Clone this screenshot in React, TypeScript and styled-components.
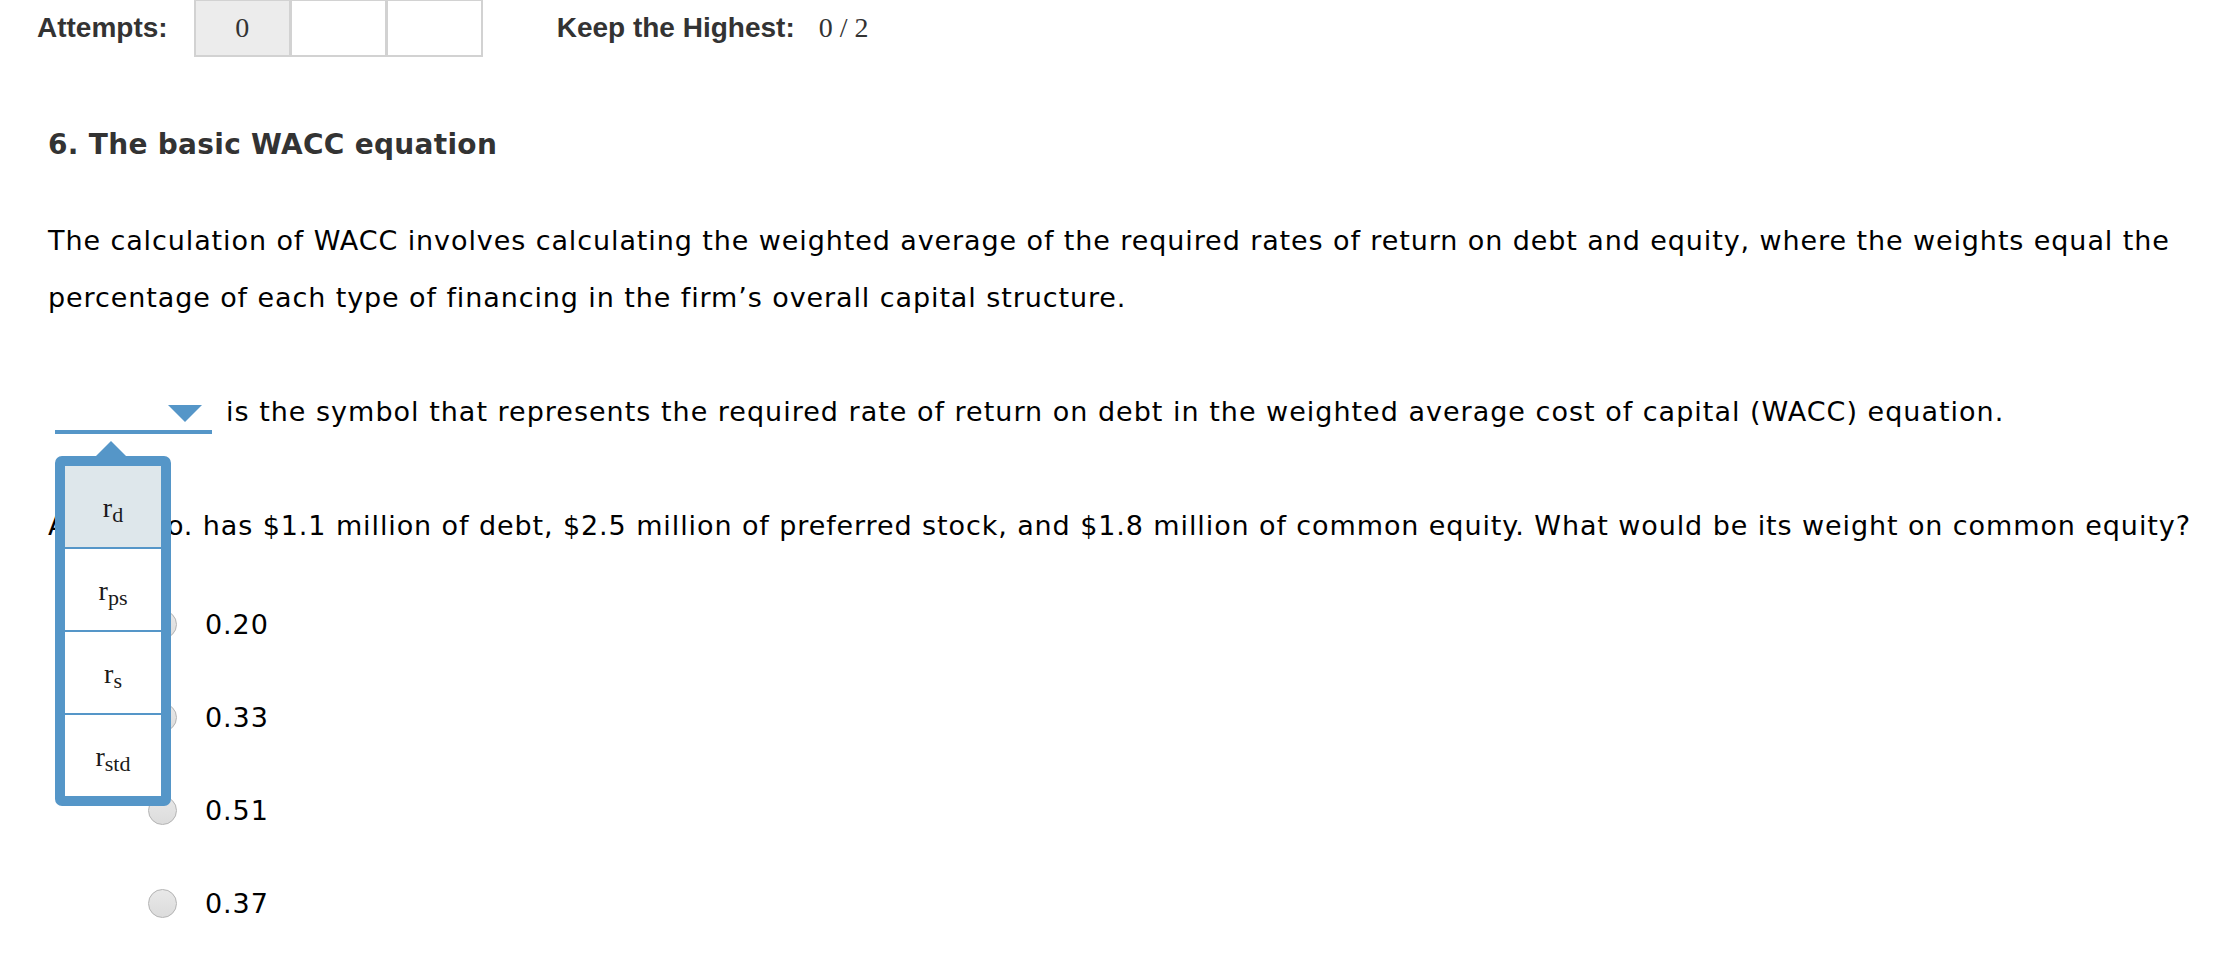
import React from "react";
import styled, { createGlobalStyle } from "styled-components";

const GlobalStyle = createGlobalStyle`
  html, body {
    margin: 0;
    padding: 0;
    background: #ffffff;
  }
  body {
    font-family: "DejaVu Sans", Verdana, sans-serif;
    color: #000000;
    overflow: hidden;
  }
`;

const blue = "#5596c8";

const options = ["0.20", "0.33", "0.51", "0.37"];
const choices = [
  { base: "r", sub: "d", active: true },
  { base: "r", sub: "ps" },
  { base: "r", sub: "s" },
  { base: "r", sub: "std" },
];

const App = () => {
  return (
    <>
      <GlobalStyle />
      <Page>
        <AttemptsBar>
          <BarLabel>Attempts:</BarLabel>
          <AttemptBoxes>
            <AttemptBox filled>0</AttemptBox>
            <AttemptBox />
            <AttemptBox />
          </AttemptBoxes>
          <BarLabel spaced>Keep the Highest:</BarLabel>
          <Score>0 / 2</Score>
        </AttemptsBar>

        <Content>
          <Title>6. The basic WACC equation</Title>
          <Para>
            The calculation of WACC involves calculating the weighted average of the required rates of
            return on debt and equity, where the weights equal the percentage of each type of financing in
            the firm’s overall capital structure.
          </Para>

          <Sentence>
            <DropWrap>
              <DropField>
                <Caret />
              </DropField>
              <Popup>
                <PopupArrow />
                <PopupList>
                  {choices.map((c, i) => (
                    <Choice key={i} active={c.active} first={i === 0}>
                      <Sym>
                        {c.base}
                        <Sub>{c.sub}</Sub>
                      </Sym>
                    </Choice>
                  ))}
                </PopupList>
              </Popup>
            </DropWrap>
            <SentenceText>
              is the symbol that represents the required rate of return on debt in the weighted average cost
              of capital (WACC) equation.
            </SentenceText>
          </Sentence>

          <Question>
            Albion Co. has $1.1 million of debt, $2.5 million of preferred stock, and $1.8 million of common
            equity. What would be its weight on common equity?
          </Question>

          <OptionList>
            {options.map((o) => (
              <OptionRow key={o}>
                <Radio />
                <OptionLabel>{o}</OptionLabel>
              </OptionRow>
            ))}
          </OptionList>
        </Content>
      </Page>
    </>
  );
};

const Page = styled.div`
  width: 2220px;
  height: 968px;
  overflow: hidden;
`;

const AttemptsBar = styled.div`
  display: flex;
  align-items: center;
  height: 57px;
  padding-left: 37px;
  margin-top: -1px;
`;

const BarLabel = styled.span<{ spaced?: boolean }>`
  font-family: "Liberation Sans", Arial, sans-serif;
  font-weight: bold;
  font-size: 28px;
  color: #333333;
  margin-left: ${({ spaced }) => (spaced ? "74px" : "0")};
`;

const AttemptBoxes = styled.div`
  display: flex;
  margin-left: 27px;
  height: 58px;
`;

const AttemptBox = styled.div<{ filled?: boolean }>`
  box-sizing: border-box;
  width: 97px;
  height: 58px;
  border: 2px solid #d2d2d2;
  margin-left: -1px;
  background: ${({ filled }) => (filled ? "#ececec" : "#ffffff")};
  display: flex;
  align-items: center;
  justify-content: center;
  font-family: "Liberation Serif", "Times New Roman", serif;
  font-size: 28px;
  color: #333333;
`;

const Score = styled.span`
  font-family: "Liberation Serif", "Times New Roman", serif;
  font-size: 28px;
  color: #333333;
  margin-left: 24px;
`;

const Content = styled.div`
  padding-left: 48px;
  padding-right: 10px;
  font-size: 27px;
  letter-spacing: 0.9px;
`;

const Title = styled.h2`
  margin: 72px 0 0;
  font-size: 28px;
  line-height: 34px;
  font-weight: bold;
  letter-spacing: 0.3px;
  color: #333333;
`;

const Para = styled.p`
  margin: 50px 0 0;
  line-height: 57px;
`;

const Sentence = styled.div`
  margin-top: 57px;
  display: flex;
  align-items: flex-end;
  height: 57px;
`;

const DropWrap = styled.div`
  position: relative;
  margin-left: 7px;
  margin-bottom: 6px;
  width: 157px;
  height: 47px;
`;

const DropField = styled.div`
  box-sizing: border-box;
  width: 157px;
  height: 47px;
  border-bottom: 4px solid ${blue};
  position: relative;
`;

const Caret = styled.span`
  position: absolute;
  right: 10px;
  top: 18px;
  width: 0;
  height: 0;
  border-left: 17px solid transparent;
  border-right: 17px solid transparent;
  border-top: 17px solid ${blue};
`;

const Popup = styled.div`
  position: absolute;
  left: 0;
  top: 54px;
  z-index: 5;
`;

const PopupArrow = styled.div`
  width: 0;
  height: 0;
  margin-left: 41px;
  border-left: 15px solid transparent;
  border-right: 15px solid transparent;
  border-bottom: 15px solid ${blue};
`;

const PopupList = styled.div`
  box-sizing: border-box;
  width: 116px;
  border: 10px solid ${blue};
  border-radius: 7px;
  background: #ffffff;
`;

const Choice = styled.div<{ active?: boolean; first?: boolean }>`
  height: 81px;
  display: flex;
  align-items: center;
  justify-content: center;
  background: ${({ active }) => (active ? "#dee7eb" : "#ffffff")};
  border-top: ${({ first }) => (first ? "none" : `2px solid ${blue}`)};
`;

const Sym = styled.span`
  font-family: "Liberation Serif", "Times New Roman", serif;
  font-size: 28px;
  letter-spacing: 0;
  color: #1a1a1a;
  padding-top: 6px;
`;

const Sub = styled.sub`
  font-size: 22px;
  vertical-align: -5px;
`;

const SentenceText = styled.span`
  line-height: 57px;
  margin-left: 14px;
  letter-spacing: 1px;
  align-self: center;
`;

const Question = styled.p`
  margin: 57px 0 0;
  line-height: 57px;
  white-space: nowrap;
`;

const OptionList = styled.div`
  margin-top: 24px;
  padding-left: 100px;
`;

const OptionRow = styled.label`
  display: flex;
  align-items: center;
  height: 93px;
`;

const Radio = styled.span`
  box-sizing: border-box;
  width: 29px;
  height: 29px;
  border-radius: 50%;
  border: 1px solid #b3b3b3;
  background: linear-gradient(#e8e8e8, #dcdcdc);
`;

const OptionLabel = styled.span`
  margin-left: 28px;
`;

export default App;
